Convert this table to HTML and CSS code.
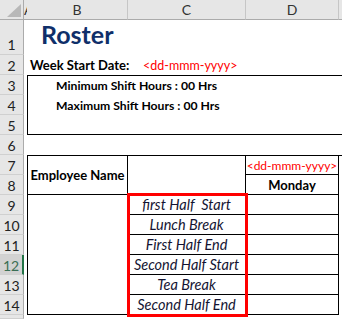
FILE: index.html
```html
<!DOCTYPE html>
<html lang="en">

<head>
  <meta charset="UTF-8" />
  <title>Roster</title>
  <link rel="stylesheet" href="styles.css">
</head>

<body>

  <div class="sheet">
    <!-- column headers -->
    <div class="corner">
      <svg width="23" height="19" viewBox="0 0 23 19"><polygon points="21,4 21,17 7,17" fill="#b8b8b8" /></svg>
    </div>
    <div class="col-head col-a">A</div>
    <div class="col-head">B</div>
    <div class="col-head">C</div>
    <div class="col-head">D</div>
    <div class="col-head last"></div>

    <!-- row headers -->
    <div class="row-head r1">1</div>
    <div class="row-head">2</div>
    <div class="row-head">3</div>
    <div class="row-head">4</div>
    <div class="row-head">5</div>
    <div class="row-head">6</div>
    <div class="row-head">7</div>
    <div class="row-head">8</div>
    <div class="row-head">9</div>
    <div class="row-head">10</div>
    <div class="row-head">11</div>
    <div class="row-head selected">12</div>
    <div class="row-head">13</div>
    <div class="row-head">14</div>
    <div class="row-head"></div>

    <!-- title block -->
    <div class="title">Roster</div>
    <div class="week-label">Week Start Date:</div>
    <div class="week-date">&lt;dd-mmm-yyyy&gt;</div>

    <div class="hours-box">
      <div>Minimum Shift Hours : 00 Hrs</div>
      <div>Maximum Shift Hours : 00 Hrs</div>
    </div>

    <!-- roster table -->
    <div class="cell emp-name">Employee Name</div>
    <div class="cell emp-slot"></div>
    <div class="cell day-date">&lt;dd-mmm-yyyy&gt;</div>
    <div class="cell day-name">Monday</div>
    <div class="cell top-edge"></div>
    <div class="cell emp-body"></div>

    <div class="cell shift" style="grid-row: 10">first Half&nbsp; Start</div>
    <div class="cell shift" style="grid-row: 11">Lunch Break</div>
    <div class="cell shift" style="grid-row: 12">First Half End</div>
    <div class="cell shift" style="grid-row: 13">Second Half Start</div>
    <div class="cell shift" style="grid-row: 14">Tea Break</div>
    <div class="cell shift" style="grid-row: 15">Second Half End</div>

    <div class="cell slot" style="grid-row: 10"></div>
    <div class="cell slot" style="grid-row: 11"></div>
    <div class="cell slot" style="grid-row: 12"></div>
    <div class="cell slot" style="grid-row: 13"></div>
    <div class="cell slot" style="grid-row: 14"></div>
    <div class="cell slot" style="grid-row: 15"></div>

    <!-- highlight round the shift labels -->
    <div class="highlight"></div>
  </div>

</body>

</html>
```

FILE: styles.css
```css
* {
  margin: 0;
  padding: 0;
  box-sizing: border-box;
}

body {
  font-family: Lato, 'Noto Sans', sans-serif;
  font-size: 13px;
  color: #000;
  background: #fff;
  overflow: hidden;
  width: 342px;
  height: 319px;
}

/* Sheet grid: row headers, column A, B, C, D, E */
.sheet {
  display: grid;
  grid-template-columns: 24px 3px 101px 118px 93px 1fr;
  grid-template-rows: 20px 35px repeat(13, 20px) 4px;
  width: 342px;
  height: 319px;
}

.corner {
  grid-row: 1;
  grid-column: 1;
  background: #e6e6e6;
  border-right: 1px solid #ababab;
  border-bottom: 1px solid #ababab;
}

.corner svg {
  display: block;
}

.col-head {
  grid-row: 1;
  background: #e6e6e6;
  border-right: 1px solid #c6c6c6;
  border-bottom: 1px solid #ababab;
  color: #333;
  font-size: 14px;
  display: flex;
  align-items: center;
  justify-content: center;
  overflow: hidden;
}

/* column A is squeezed to a sliver, only the edge of its letter shows */
.col-head.col-a {
  justify-content: flex-start;
  border-right: none;
}

.col-head.last {
  border-right: none;
}

.row-head {
  grid-column: 1;
  background: #e6e6e6;
  border-right: 1px solid #ababab;
  border-bottom: 1px solid #d0d0d0;
  color: #222;
  font-size: 14px;
  display: flex;
  align-items: center;
  justify-content: center;
  padding-top: 1px;
  overflow: hidden;
}

.row-head.r1 {
  align-items: flex-end;
  padding-bottom: 1px;
}

.row-head.selected {
  background: #d2d2d2;
  border-right: 2px solid #217346;
  color: #3a6e54;
}

/* Title block */
.title {
  grid-row: 2;
  grid-column: 3 / 5;
  font-size: 25px;
  font-weight: bold;
  color: #0f2f6a;
  padding-left: 14px;
  display: flex;
  align-items: flex-end;
  line-height: 1;
  padding-bottom: 8px;
}

.week-label {
  grid-row: 3;
  grid-column: 3;
  font-weight: bold;
  padding-left: 3px;
  display: flex;
  align-items: center;
  white-space: nowrap;
}

.week-date {
  grid-row: 3;
  grid-column: 4;
  color: #f00;
  font-size: 12.5px;
  padding-left: 15px;
  display: flex;
  align-items: center;
  white-space: nowrap;
}

.hours-box {
  grid-row: 4 / 7;
  grid-column: 3 / 7;
  border: 1px solid #000;
  border-right: none;
  font-weight: bold;
  font-size: 12.2px;
  padding-left: 28px;
  white-space: nowrap;
}

.hours-box div {
  height: 20px;
  line-height: 20px;
}

/* Roster table */
.cell {
  display: flex;
  align-items: center;
  justify-content: center;
  white-space: nowrap;
  overflow: hidden;
  border-right: 1px solid #000;
  border-bottom: 1px solid #000;
}

.emp-name {
  grid-row: 8 / 10;
  grid-column: 3;
  border-left: 1px solid #000;
  border-top: 1px solid #000;
  font-weight: bold;
}

.emp-slot {
  grid-row: 8 / 10;
  grid-column: 4;
  border-top: 1px solid #000;
}

.day-date {
  grid-row: 8;
  grid-column: 5;
  border-top: 1px solid #000;
  color: #f00;
  font-size: 12px;
}

.day-name {
  grid-row: 9;
  grid-column: 5;
  font-weight: bold;
}

.top-edge {
  grid-row: 8;
  grid-column: 6;
  border-top: 1px solid #000;
  border-right: none;
  border-bottom: none;
}

.emp-body {
  grid-row: 10 / 16;
  grid-column: 3;
  border-left: 1px solid #000;
}

.shift {
  grid-column: 4;
  font-style: italic;
  font-size: 14.5px;
  color: #141432;
}

.slot {
  grid-column: 5;
}

.highlight {
  grid-row: 10 / 16;
  grid-column: 4;
  margin: -2px -2px -2px -1px;
  border: 3px solid #f00;
  pointer-events: none;
}
```
